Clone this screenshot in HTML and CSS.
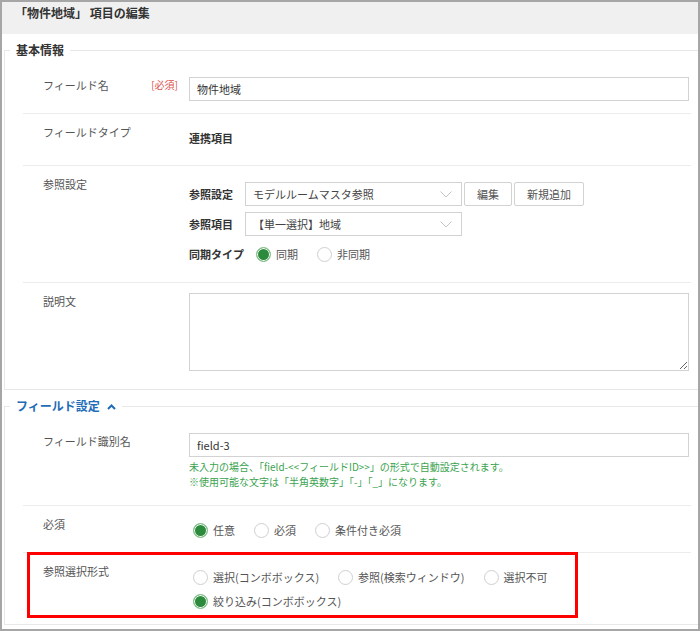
FILE: index.html
```html
<!DOCTYPE html>
<html lang="ja">
<head>
  <meta charset="UTF-8">
  <title>項目の編集</title>
  <link rel="stylesheet" href="styles.css">
</head>
<body>
  <div class="dialog">
    <div class="dialog-head">「物件地域」 項目の編集</div>

    <fieldset class="group">
      <legend class="group-title">基本情報</legend>

      <div class="row row-input">
        <div class="row-label">フィールド名<span class="req">[必須]</span></div>
        <div class="row-body"><input class="text" type="text" value="物件地域"></div>
      </div>

      <div class="row">
        <div class="row-label">フィールドタイプ</div>
        <div class="row-body static">連携項目</div>
      </div>

      <div class="row">
        <div class="row-label">参照設定</div>
        <div class="row-body sub-rows">
          <div class="sub-row">
            <span class="sub-label">参照設定</span>
            <div class="select">モデルルームマスタ参照
              <svg class="caret" width="12" height="7" viewBox="0 0 12 7"><polyline points="0.5,0.5 6,6 11.5,0.5" fill="none" stroke="#c4c4c4" stroke-width="1"/></svg>
            </div>
            <button class="btn">編集</button>
            <button class="btn">新規追加</button>
          </div>
          <div class="sub-row">
            <span class="sub-label">参照項目</span>
            <div class="select">【単一選択】地域
              <svg class="caret" width="12" height="7" viewBox="0 0 12 7"><polyline points="0.5,0.5 6,6 11.5,0.5" fill="none" stroke="#c4c4c4" stroke-width="1"/></svg>
            </div>
          </div>
          <div class="sub-row">
            <span class="sub-label">同期タイプ</span>
            <label class="opt"><span class="radio on"></span>同期</label>
            <label class="opt"><span class="radio"></span>非同期</label>
          </div>
        </div>
      </div>

      <div class="row">
        <div class="row-label">説明文</div>
        <div class="row-body"><textarea class="memo"></textarea></div>
      </div>
    </fieldset>

    <fieldset class="group group-field">
      <legend class="group-title link">フィールド設定
        <svg class="fold" width="9" height="6" viewBox="0 0 9 6"><polyline points="1,5 4.5,1.5 8,5" fill="none" stroke="#1f6cb8" stroke-width="2"/></svg>
      </legend>

      <div class="row">
        <div class="row-label">フィールド識別名</div>
        <div class="row-body">
          <input class="text" type="text" value="field-3">
          <p class="help">未入力の場合、「field-&lt;&lt;フィールドID&gt;&gt;」の形式で自動設定されます。<br>※使用可能な文字は「半角英数字」「-」「_」になります。</p>
        </div>
      </div>

      <div class="row">
        <div class="row-label">必須</div>
        <div class="row-body opts">
          <div class="opt-line">
            <label class="opt"><span class="radio on"></span>任意</label>
            <label class="opt"><span class="radio"></span>必須</label>
            <label class="opt"><span class="radio"></span>条件付き必須</label>
          </div>
        </div>
      </div>

      <div class="row marked">
        <div class="row-label">参照選択形式</div>
        <div class="row-body opts">
          <div class="opt-line">
            <label class="opt"><span class="radio"></span>選択(コンボボックス)</label>
            <label class="opt"><span class="radio"></span>参照(検索ウィンドウ)</label>
            <label class="opt"><span class="radio"></span>選択不可</label>
          </div>
          <div class="opt-line">
            <label class="opt"><span class="radio on"></span>絞り込み(コンボボックス)</label>
          </div>
        </div>
        <div class="highlight"></div>
      </div>
    </fieldset>
  </div>
</body>
</html>
```

FILE: styles.css
```css
body {
  margin: 0;
  font-family: "Noto Sans CJK JP", "Noto Sans", sans-serif;
  font-size: 11px;
  color: #555;
  background: #fff;
}
.dialog {
  width: 700px;
  height: 631px;
  box-sizing: border-box;
  border: 2px solid #a6a6a6;
  overflow: hidden;
}
.dialog-head {
  height: 32px;
  box-sizing: border-box;
  padding: 2px 13px 0;
  background: #f0f0f0;
  font-size: 12px;
  font-weight: bold;
  line-height: 18px;
  color: #333;
}
.group {
  margin: 7px 0 0 2px;
  padding: 8px 7px 8px 0;
  border: 1px solid #e8e8e8;
  border-right: 0;
  min-width: 0;
}
.group-field {
  padding-bottom: 5px;
}
.group-title {
  margin-left: 5px;
  padding: 0 6px;
  font-size: 12px;
  font-weight: bold;
  line-height: 18px;
  color: #333;
}
.group-title.link {
  color: #1f6cb8;
}
.fold {
  margin-left: 4px;
  vertical-align: 1px;
}
.row {
  position: relative;
  display: flex;
  margin-left: 18px;
  padding: 10px 0 10px 20px;
  border-top: 1px solid #ececec;
  line-height: 16px;
}
.row:first-of-type {
  border-top: 0;
}
.row-input {
  padding-bottom: 12px;
}
.row-label {
  display: flex;
  justify-content: space-between;
  width: 135px;
  padding-right: 11px;
  flex-shrink: 0;
}
.req {
  color: #d9534f;
  font-size: 10px;
}
.row-body {
  width: 500px;
}
.static {
  padding: 6px 0 9px;
  font-weight: bold;
  color: #333;
}
.text {
  display: block;
  width: 100%;
  height: 24px;
  box-sizing: border-box;
  padding: 0 7px;
  border: 1px solid #d2d2d2;
  font: inherit;
  color: #333;
}
.memo {
  display: block;
  width: 100%;
  height: 78px;
  box-sizing: border-box;
  border: 1px solid #d2d2d2;
  font: inherit;
}
.help {
  margin: 2px 0 6px;
  font-size: 10px;
  line-height: 15px;
  color: #3aa34f;
}
.sub-rows {
  display: flex;
  flex-direction: column;
  gap: 6px;
  padding: 6px 0;
}
.sub-row {
  display: flex;
  align-items: center;
  height: 24px;
}
.sub-label {
  min-width: 48px;
  margin-right: 8px;
  font-weight: bold;
  color: #333;
}
.select {
  display: flex;
  align-items: center;
  justify-content: space-between;
  width: 217px;
  height: 24px;
  box-sizing: border-box;
  padding: 0 9px 0 7px;
  border: 1px solid #d2d2d2;
  color: #444;
}
.btn {
  height: 24px;
  margin-left: 2px;
  padding: 0 12px;
  border: 1px solid #d2d2d2;
  border-radius: 2px;
  background: #fff;
  font: inherit;
  color: #555;
}
.opts {
  display: flex;
  flex-direction: column;
  gap: 8px;
  padding: 6px 0 4px;
}
.marked .opts {
  padding-bottom: 0;
}
.opt-line {
  display: flex;
  align-items: center;
  height: 16px;
}
.opt {
  display: flex;
  align-items: center;
  margin-right: 15px;
}
.radio {
  width: 15px;
  height: 15px;
  box-sizing: border-box;
  margin: 0 5px 0 4px;
  border: 1px solid #cfcfcf;
  border-radius: 50%;
  background: #fff;
}
.radio.on {
  border-color: #8cc492;
  background: #2c8a3c;
  box-shadow: inset 0 0 0 1px #fff;
}
.highlight {
  position: absolute;
  left: 4px;
  top: -1px;
  width: 551px;
  height: 66px;
  box-sizing: border-box;
  border: 3px solid #ff0000;
}
```
